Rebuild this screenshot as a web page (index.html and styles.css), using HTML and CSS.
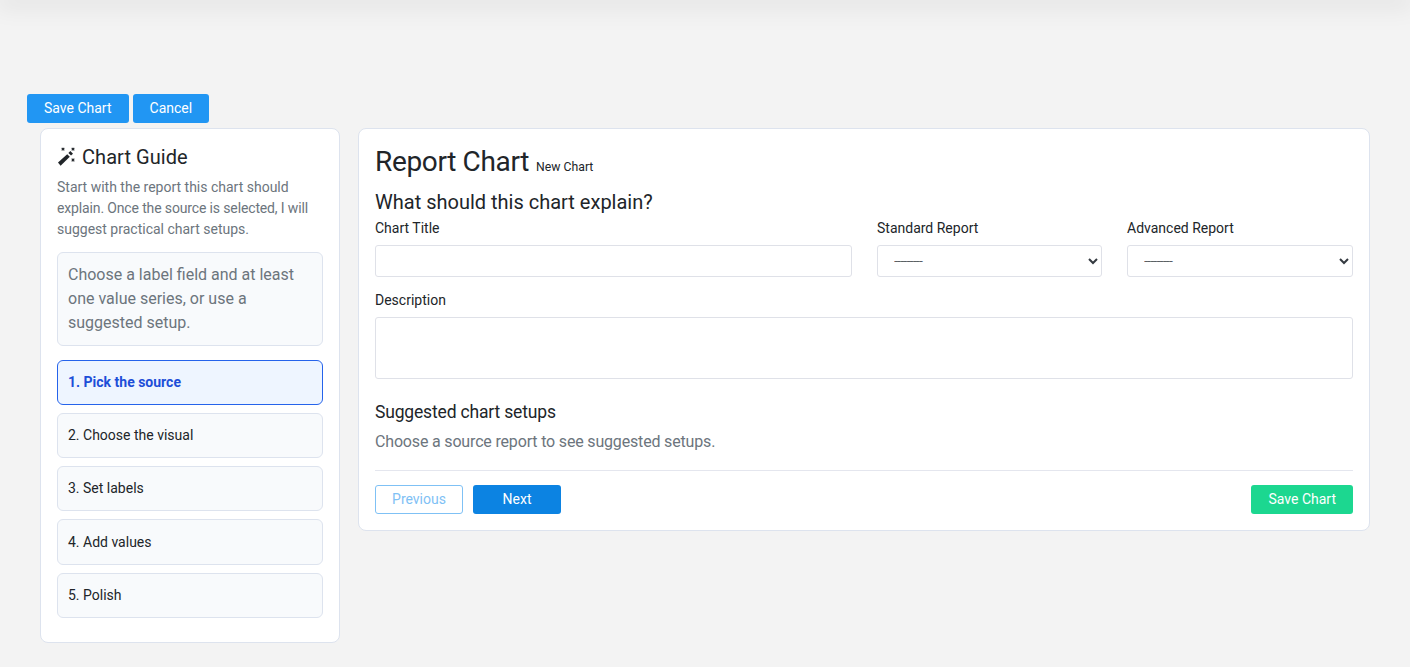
FILE: index.html
```html
<!DOCTYPE html>
<html lang="en">
<head>
<meta charset="utf-8">
<title>Report Chart</title>
<link rel="stylesheet" href="styles.css">
</head>
<body>
<div class="topbar"></div>
<div class="toolbar">
  <button class="btn btn-sky">Save Chart</button>
  <button class="btn btn-sky">Cancel</button>
</div>
<div class="layout">
  <aside class="card guide">
    <h2 class="guide-title">
      <svg class="wand" viewBox="0 0 20 20" width="20" height="20" aria-hidden="true">
        <path d="M1 15.6 10.2 7.2l2.6 2.6-9.2 8.9z" fill="#212529"/>
        <path d="M11.4 6l2-1.9 2.6 2.6-2 1.9z" fill="#212529"/>
        <path d="M4.7.8l2.6 2.6M7.3.8 4.7 3.4M14.7.8l2.6 2.6M17.3.8l-2.6 2.6M14.7 11.7l2.6 2.6M17.3 11.7l-2.6 2.6" stroke="#212529" stroke-width="1.2" fill="none"/>
      </svg>
      <span class="guide-name">Chart Guide</span>
    </h2>
    <p class="guide-text">Start with the report this chart should <span class="tight">explain. Once the source is selected, I will</span> suggest practical chart setups.</p>
    <div class="hint">Choose a label field and at least one value series, or use a suggested setup.</div>
    <ol class="steps">
      <li class="step step-active">1. Pick the source</li>
      <li class="step">2. Choose the visual</li>
      <li class="step">3. Set labels</li>
      <li class="step">4. Add values</li>
      <li class="step">5. Polish</li>
    </ol>
  </aside>
  <main class="card editor">
    <h1 class="page-title"><span class="page-name">Report Chart</span> <small class="page-sub">New Chart</small></h1>
    <h2 class="section-title">What should this chart explain?</h2>
    <div class="field-row">
      <div class="field">
        <label class="label" for="t">Chart Title</label>
        <input class="control" id="t" type="text">
      </div>
      <div class="field">
        <label class="label" for="s">Standard Report</label>
        <select class="control select" id="s"><option>---------</option></select>
      </div>
      <div class="field">
        <label class="label" for="a">Advanced Report</label>
        <select class="control select" id="a"><option>---------</option></select>
      </div>
    </div>
    <div class="field field-desc">
      <label class="label" for="d">Description</label>
      <textarea class="control area" id="d"></textarea>
    </div>
    <h3 class="setups-title">Suggested chart setups</h3>
    <p class="setups-text">Choose a source report to see suggested setups.</p>
    <div class="actions">
      <button class="btn btn-outline" disabled>Previous</button>
      <button class="btn btn-blue">Next</button>
      <button class="btn btn-green">Save Chart</button>
    </div>
  </main>
</div>
</body>
</html>
```
FILE: styles.css
```css
* { box-sizing: border-box; }
html, body { margin: 0; padding: 0; }
body {
  background: #f3f3f3;
  color: #212529;
  font-family: Roboto, "Liberation Sans", sans-serif;
  font-size: 14px;
  line-height: 1.5;
  height: 667px;
  overflow: hidden;
}
.topbar {
  height: 0;
  box-shadow: 0 0 24px 4px rgba(0, 0, 0, 0.14);
}
.toolbar {
  display: flex;
  gap: 4px;
  padding: 94px 0 0 27px;
}
.btn {
  font-family: inherit;
  font-size: 14px;
  line-height: 21px;
  height: 29px;
  padding: 3px 16px;
  border: 1px solid transparent;
  border-radius: 3px;
  color: #fff;
  cursor: pointer;
}
.btn-sky { background: #2196f3; }
.btn-blue { background: #0c83e2; width: 88px; }
.btn-green { background: #1cd790; margin-left: auto; }
.btn-outline {
  background: #fff;
  border-color: #7fc1f5;
  color: #7fc1f5;
  width: 88px;
}
.layout {
  display: flex;
  align-items: flex-start;
  gap: 18px;
  padding: 5px 40px 0;
}
.card {
  background: #fff;
  border: 1px solid #dde3ee;
  border-radius: 8px;
  padding: 16px;
}
.guide { width: 300px; flex: none; height: 515px; }
.editor { flex: 1; height: 403px; }
.guide-title {
  display: flex;
  align-items: center;
  gap: 5px;
  margin: 0 0 8px;
  font-size: 20px;
  font-weight: 400;
  line-height: 24px;
}
.guide-name { letter-spacing: 0.05px; }
.wand { flex: none; }
.guide-text {
  margin: 0 0 12px;
  color: #6c757d;
  line-height: 21px;
}
.tight { letter-spacing: -0.14px; }
.hint {
  background: #f8fafc;
  border: 1px solid #dde3ee;
  border-radius: 6px;
  padding: 10px;
  color: #6c757d;
  font-size: 16px;
  line-height: 24px;
  margin-bottom: 13.7px;
}
.steps {
  list-style: none;
  margin: 0;
  padding: 0;
  display: flex;
  flex-direction: column;
  gap: 8px;
}
.step {
  background: #f8fafc;
  border: 1px solid #dde3ee;
  border-radius: 6px;
  padding: 11.125px 10px;
  line-height: 21px;
  color: #212529;
}
.step-active {
  background: #eef5ff;
  border-color: #2563eb;
  color: #1d4ed8;
  font-weight: 700;
}
.page-title {
  margin: 0;
  font-size: 28px;
  font-weight: 400;
  line-height: 34px;
}
.page-name { letter-spacing: -0.35px; }
.page-sub { font-size: 12.25px; }
.section-title {
  margin: 6px 0 0;
  font-size: 20px;
  font-weight: 400;
  line-height: 24px;
}
.field-row {
  display: grid;
  grid-template-columns: 477px 225px 1fr;
  gap: 25px;
  margin-top: 4px;
}
.field { display: flex; flex-direction: column; }
.label { line-height: 21px; margin-bottom: 6px; }
.control {
  width: 100%;
  height: 32px;
  border: 1px solid #dfe1e8;
  border-radius: 3px;
  background: #fff;
  font-family: inherit;
  font-size: 14px;
  color: #495057;
  padding: 0 12px;
}
.select {
  padding-left: 12px;
  letter-spacing: -0.9px;
  font-weight: 300;
  color: #343a40;
}
.area { height: 62px; display: block; resize: none; }
.field-desc { margin-top: 13px; }
.setups-title {
  margin: 21px 0 0;
  font-size: 17.5px;
  font-weight: 400;
  line-height: 24px;
  letter-spacing: -0.17px;
}
.setups-text {
  margin: 6px 0 0;
  color: #6c757d;
  font-size: 16px;
  line-height: 24px;
  letter-spacing: -0.17px;
}
.actions {
  display: flex;
  gap: 10px;
  margin-top: 16px;
  padding-top: 14px;
  border-top: 1px solid #e4e6ee;
}
```
